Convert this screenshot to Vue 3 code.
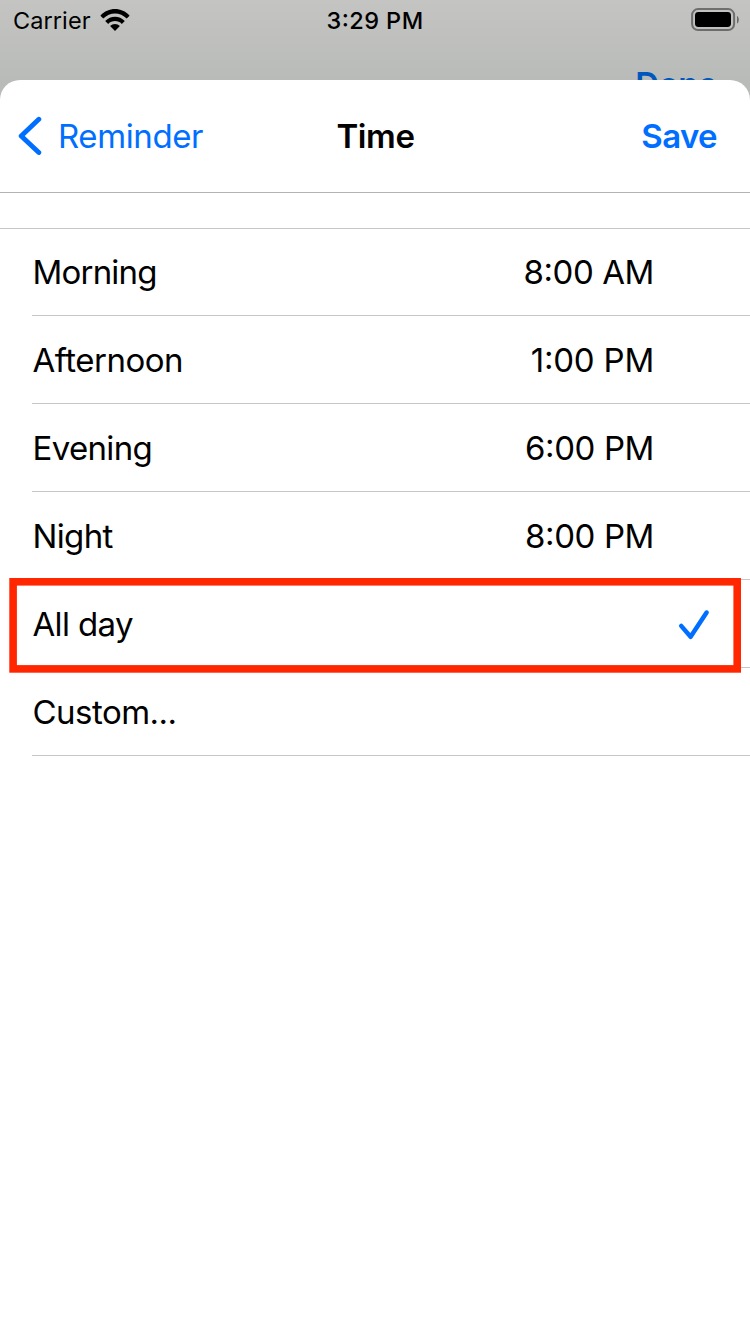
<script setup>
const rows = [
  { id: 'morning', label: 'Morning', time: '8:00 AM' },
  { id: 'afternoon', label: 'Afternoon', time: '1:00 PM' },
  { id: 'evening', label: 'Evening', time: '6:00 PM' },
  { id: 'night', label: 'Night', time: '8:00 PM' },
  { id: 'allday', label: 'All day', selected: true },
  { id: 'custom', label: 'Custom...' },
]
</script>

<template>
  <div class="screen">
    <div class="backdrop">
      <div class="status">
        <div class="side">
          <span class="carrier">Carrier</span>
          <svg class="wifi" width="30" height="22" viewBox="0 0 30 22">
            <path d="M.4 6.7C8.2-2.2 21.8-2.2 29.6 6.7L26.7 9.6C20.3 2.7 9.7 2.7 3.3 9.6Z" />
            <path d="M5.2 11.9C10.5 6.2 19.5 6.2 24.8 11.9L21.8 14.9C18.2 11.1 11.8 11.1 8.2 14.9Z" />
            <path d="M10.1 17C12.8 14.3 17.2 14.3 19.9 17L15 22Z" />
          </svg>
        </div>
        <span class="clock">3:29 PM</span>
        <div class="side end">
          <svg width="49" height="24" viewBox="0 0 49 24">
            <rect x="1.1" y="1.1" width="42" height="21" rx="6" fill="none" stroke="#000" stroke-opacity=".43" stroke-width="2" />
            <rect x="4" y="4" width="36" height="15" rx="3.4" />
            <path d="M46 8V15.5C48.4 14.5 48.4 9 46 8Z" fill-opacity=".45" />
          </svg>
        </div>
      </div>
      <div class="under"><span class="done">Done</span></div>
    </div>
    <div class="sheet">
      <header class="nav">
        <div class="back">
          <svg width="26" height="40" viewBox="0 0 26 40"><path d="M21.8 3.3 4.2 20 21.8 36.5" fill="none" stroke="#006fff" stroke-width="4.9" stroke-linecap="round" stroke-linejoin="round" /></svg>
          <span class="back-label">Reminder</span>
        </div>
        <span class="title">Time</span>
        <span class="save">Save</span>
      </header>
      <div class="list">
        <div v-for="r in rows" :key="r.id" class="row" :class="r.id">
          <span class="label">{{ r.label }}</span>
          <span v-if="r.time" class="time">{{ r.time }}</span>
          <svg v-if="r.selected" class="check" width="32" height="32" viewBox="0 0 32 32"><path d="M3.2 17.9 12.6 28.8 28.6 4.5" fill="none" stroke="#006fff" stroke-width="4.5" stroke-linecap="round" stroke-linejoin="round" /></svg>
          <svg v-if="r.selected" class="highlight" width="750" height="110" viewBox="0 0 750 110">
            <rect x="13.1" y="11.8" width="724.1" height="87.1" fill="none" stroke="#ff2600" stroke-width="7.6" />
          </svg>
        </div>
      </div>
    </div>
  </div>
</template>

<style>
body { background: #fff; }
</style>

<style scoped>
.screen {
  width: 750px;
  height: 1334px;
  overflow: hidden;
  display: flex;
  flex-direction: column;
  background: #b9bbb8;
  font-family: Inter, "Liberation Sans", sans-serif;
  font-size: 33px;
  color: #000;
  white-space: nowrap;
}
.backdrop {
  height: 80px;
  flex: none;
  background: linear-gradient(#c4c5c2, #b9bbb8);
}
.status {
  height: 40px;
  display: grid;
  grid-template-columns: 1fr auto 1fr;
  align-items: center;
}
.side { display: flex; align-items: center; padding-left: 13px; }
.end { justify-content: flex-end; padding: 0 10px 0 0; }
.wifi { margin-left: 9px; }
.carrier { font-size: 23.5px; letter-spacing: .08px; }
.clock { font-size: 23.5px; font-weight: 500; letter-spacing: .45px; font-feature-settings: "case"; }
.under {
  height: 40px;
  display: flex;
  justify-content: flex-end;
  padding: 24px 33px 0 0;
  box-sizing: border-box;
}
.done { font-weight: 600; color: #0057bd; line-height: 40px; letter-spacing: -.5px; }
.sheet {
  position: relative;
  flex: 1;
  background: #fff;
  border-radius: 20px 20px 0 0;
}
.nav {
  height: 113px;
  box-sizing: border-box;
  border-bottom: 1px solid #b3b3b3;
  display: grid;
  grid-template-columns: 1fr auto 1fr;
  align-items: center;
}
.back { display: flex; align-items: center; gap: 15px; padding-left: 17px; color: #006fff; }
.back-label { letter-spacing: -.4px; }
.title { font-weight: 600; letter-spacing: -.4px; padding-left: 1px; }
.save { font-weight: 600; color: #006fff; justify-self: end; padding-right: 33px; letter-spacing: -.6px; }
.list { margin-top: 35px; border-top: 1px solid #c6c6c8; }
.row {
  position: relative;
  height: 88px;
  box-sizing: border-box;
  margin-left: 32px;
  padding-right: 96px;
  border-bottom: 1px solid #c6c6c8;
  display: flex;
  align-items: center;
  justify-content: space-between;
}
.row:first-child { height: 87px; }
.label { padding-left: .5px; letter-spacing: -.65px; }
.morning .label { letter-spacing: -.8px; }
.afternoon .label, .custom .label { letter-spacing: -.52px; }
.time { letter-spacing: -.4px; font-feature-settings: "case"; }
.afternoon .time { letter-spacing: -.2px; }
.allday { padding-right: 40px; }
.highlight {
  position: absolute;
  left: -32px;
  top: -10px;
}
</style>
